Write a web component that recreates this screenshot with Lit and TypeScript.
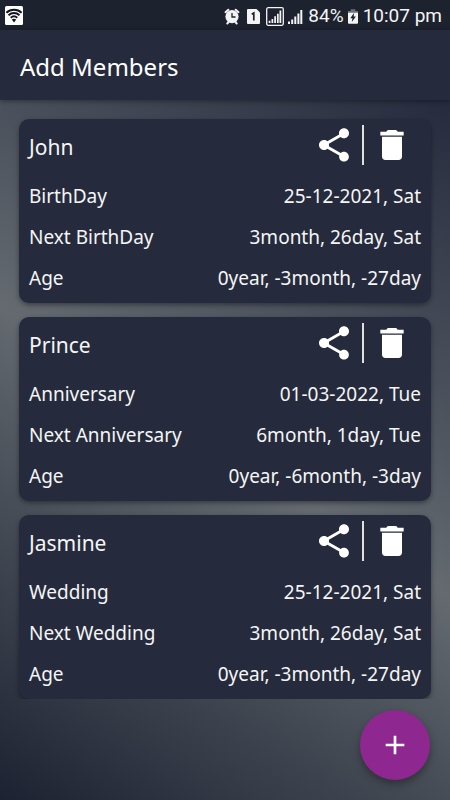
import { LitElement, html, svg, css } from "lit";
import { customElement, property } from "lit/decorators.js";

interface Member {
  name: string;
  event: string;
  date: string;
  next: string;
  age: string;
}

const MEMBERS: Member[] = [
  { name: "John", event: "BirthDay", date: "25-12-2021, Sat", next: "3month, 26day, Sat", age: "0year, -3month, -27day" },
  { name: "Prince", event: "Anniversary", date: "01-03-2022, Tue", next: "6month, 1day, Tue", age: "0year, -6month, -3day" },
  { name: "Jasmine", event: "Wedding", date: "25-12-2021, Sat", next: "3month, 26day, Sat", age: "0year, -3month, -27day" },
];

@customElement("status-bar")
export class StatusBar extends LitElement {
  static styles = css`
    :host {
      display: flex;
      align-items: center;
      justify-content: space-between;
      height: 30px;
      padding: 2px 8px 0 4px;
      box-sizing: border-box;
      background: #1d222f;
      color: #f4f4f4;
      font: 19px/24px Roboto, sans-serif;
    }
    svg {
      display: block;
      flex: none;
    }
    .right {
      display: flex;
      align-items: center;
    }
    .clock {
      margin-left: 5px;
    }
    .sim {
      margin: 0 6px 0 7px;
    }
    .battery {
      margin-left: 4px;
    }
    .percent {
      margin-left: 5px;
    }
    .plain {
      margin-left: 3px;
    }
  `;

  private bars() {
    return svg`<path d="M1 12.500h2V15H1zM4.200 10.500h2V15h-2zM7.300 7.500h2V15h-2zM10.400 4.500h2V15h-2zM13.300 1h2v14h-2z" fill="#f4f4f4"/>`;
  }

  render() {
    return html`
      <svg width="20" height="20" viewBox="0 0 20 20" role="img" aria-label="Wi-Fi">
        <rect x="1" y="0" width="18" height="19" rx="1.500" fill="#fff" />
        <g fill="none" stroke="#10141d" stroke-width="1.900">
          <path d="M2.400 6.700C6.500 2.800 13.500 2.800 17.600 6.700" />
          <path d="M4.500 9.200c3.200-2.900 7.800-2.900 11 0" />
          <path d="M6.700 11.700c2-1.700 4.600-1.700 6.600 0" />
        </g>
        <path d="M7.800 13.400c1.300-.9 3.100-.9 4.400 0L10 16.600z" fill="#10141d" />
      </svg>
      <div class="right">
        <svg width="16" height="17" viewBox="0 0 16 17" role="img" aria-label="Alarm">
          <g fill="none" stroke="#f4f4f4" stroke-width="2" stroke-linecap="round">
            <path d="M1.500 4.200L4.300 1.700M14.500 4.200L11.700 1.700M3.300 15.500l1-1.200M12.700 15.500l-1-1.200" />
          </g>
          <circle cx="8" cy="8.600" r="6.600" fill="#f4f4f4" />
          <path d="M8 5v4h3.500" fill="none" stroke="#1d222f" stroke-width="1.300" />
        </svg>
        <svg class="sim" width="13" height="15" viewBox="0 0 13 15" role="img" aria-label="SIM 1">
          <path d="M1 0h8.500L13 3.500V14a1 1 0 0 1-1 1H1a1 1 0 0 1-1-1V1a1 1 0 0 1 1-1z" fill="#f4f4f4" />
          <path d="M4.700 5.200L6.800 4v7.500" fill="none" stroke="#1d222f" stroke-width="1.700" />
        </svg>
        <svg width="18" height="19" viewBox="0 0 18 19" role="img" aria-label="Signal, SIM 1">
          <rect x=".7" y=".7" width="16.600" height="17.600" rx="1.500" fill="none" stroke="#f4f4f4" stroke-width="1.300" />
          <g transform="translate(1.800 2.700) scale(.88)">${this.bars()}</g>
        </svg>
        <svg class="plain" width="16" height="17" viewBox="0 0 16 17" role="img" aria-label="Signal, SIM 2">
          <g transform="translate(0 1)">${this.bars()}</g>
        </svg>
        <span class="percent">84%</span>
        <svg class="battery" width="10" height="15" viewBox="0 0 11 16" role="img" aria-label="Charging">
          <path d="M3 0h5v2h3v3H0V2h3z" fill="#6d7077" />
          <path d="M0 4h11v11a1 1 0 0 1-1 1H1a1 1 0 0 1-1-1z" fill="#f4f4f4" />
          <path d="M6.800 4L2.500 9.800h2.400L4.200 14l4.500-6H6.200z" fill="#1d222f" />
        </svg>
        <span class="clock">10:07 pm</span>
      </div>
    `;
  }
}

@customElement("member-card")
export class MemberCard extends LitElement {
  @property({ attribute: false }) member!: Member;

  static styles = css`
    :host {
      display: block;
      padding: 0 10px 4px;
      border-radius: 10px;
      background: #252b3d;
      color: #f5f5f5;
      box-shadow: 0 2px 5px rgba(0, 0, 0, 0.4);
    }
    .head {
      display: flex;
      justify-content: space-between;
      align-items: flex-start;
      padding-right: 9px;
    }
    h2 {
      margin: 0;
      font-size: 21px;
      font-weight: 400;
      line-height: 57px;
    }
    .actions {
      display: flex;
      gap: 8px;
      padding-top: 6px;
    }
    button {
      width: 40px;
      height: 40px;
      padding: 0;
      border: 0;
      background: none;
      color: #fff;
      cursor: pointer;
    }
    svg {
      display: block;
    }
    .divider {
      width: 2px;
      background: #e3e0dc;
    }
    dl {
      margin: 0;
      font-size: 19px;
      line-height: 41px;
    }
    .row {
      display: flex;
      justify-content: space-between;
    }
    dd {
      margin: 0;
    }
  `;

  render() {
    const m = this.member;
    return html`
      <div class="head">
        <h2>${m.name}</h2>
        <div class="actions">
          <button type="button" aria-label="Share ${m.name}">
            <svg width="40" height="40" viewBox="0 0 24 24" fill="currentColor">
              <path
                d="M18 16.080c-.76 0-1.440.3-1.960.77L8.910 12.700c.05-.23.09-.46.09-.7s-.04-.47-.09-.7l7.050-4.110c.54.5 1.250.81 2.040.81 1.660 0 3-1.340 3-3s-1.340-3-3-3-3 1.340-3 3c0 .24.04.47.09.7L8.040 9.810C7.500 9.310 6.790 9 6 9c-1.660 0-3 1.340-3 3s1.340 3 3 3c.79 0 1.500-.31 2.040-.81l7.120 4.160c-.05.21-.08.43-.08.65 0 1.610 1.310 2.920 2.920 2.920s2.920-1.310 2.920-2.920-1.310-2.920-2.920-2.920z"
              />
            </svg>
          </button>
          <div class="divider"></div>
          <button type="button" aria-label="Delete ${m.name}">
            <svg width="40" height="40" viewBox="0 0 24 24" fill="currentColor">
              <path d="M6 19c0 1.100.9 2 2 2h8c1.100 0 2-.9 2-2V7H6v12zM19 4h-3.500l-1-1h-5l-1 1H5v2.300h14V4z" />
            </svg>
          </button>
        </div>
      </div>
      <dl>
        <div class="row"><dt>${m.event}</dt><dd>${m.date}</dd></div>
        <div class="row"><dt>Next ${m.event}</dt><dd>${m.next}</dd></div>
        <div class="row"><dt>Age</dt><dd>${m.age}</dd></div>
      </dl>
    `;
  }
}

@customElement("app-root")
export class AppRoot extends LitElement {
  static styles = css`
    :host {
      display: flex;
      flex-direction: column;
      min-height: 100vh;
      font-family: "Noto Sans", "Open Sans", sans-serif;
    }
    header {
      position: relative;
      padding: 4px 20px 0;
      background: #252b3d;
      box-shadow: 0 1px 5px rgba(0, 0, 0, 0.4);
    }
    h1 {
      margin: 0;
      color: #fff;
      font-size: 24px;
      font-weight: 400;
      line-height: 66px;
    }
    main {
      flex: 1;
      background: linear-gradient(33deg, #1c2231, #646a70 50%, #252b3d);
    }
    .list {
      display: flex;
      flex-direction: column;
      gap: 14px;
      padding: 19px 19px 0;
      overflow: hidden;
    }
    .add {
      position: fixed;
      right: 20px;
      bottom: 20px;
      display: grid;
      place-items: center;
      width: 70px;
      height: 70px;
      padding: 0;
      border: 0;
      border-radius: 50%;
      background: #8e278f;
      color: #fff;
      box-shadow: 0 4px 8px rgba(0, 0, 0, 0.35);
      cursor: pointer;
    }
  `;

  render() {
    return html`
      <status-bar></status-bar>
      <header><h1>Add Members</h1></header>
      <main>
        <div class="list">
          ${MEMBERS.map((m) => html`<member-card .member=${m}></member-card>`)}
        </div>
      </main>
      <button class="add" type="button" aria-label="Add member">
        <svg width="32" height="32" viewBox="0 0 24 24" fill="currentColor">
          <path d="M19 13h-6v6h-2v-6H5v-2h6V5h2v6h6v2z" />
        </svg>
      </button>
    `;
  }
}
